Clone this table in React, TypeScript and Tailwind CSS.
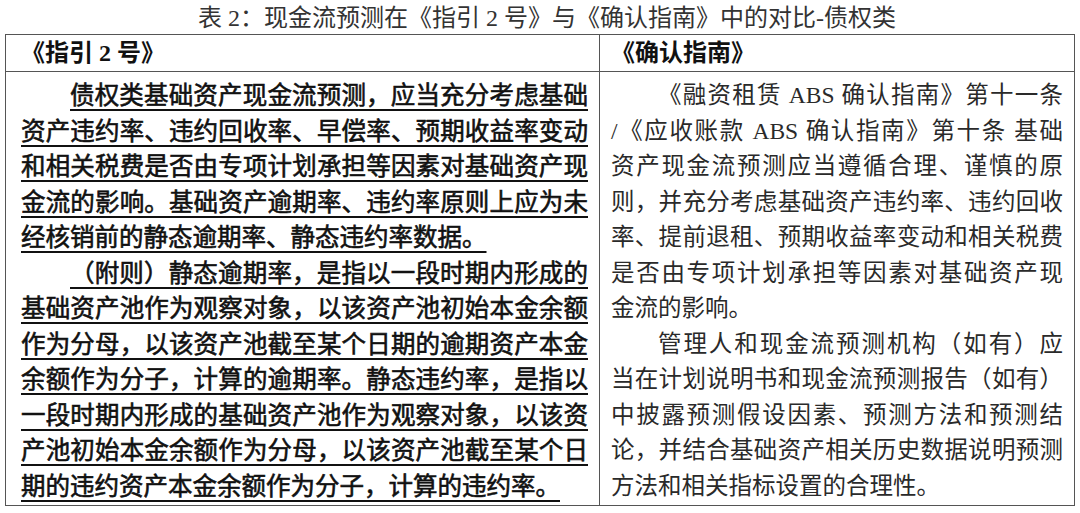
import clsx from "clsx";

const fontStack = "font-['Liberation_Serif','Noto_Sans_CJK_SC',serif]";

interface Line {
  text: string;
  indent?: boolean;
  last?: boolean;
}

const leftLines: Line[] = [
  { text: "债权类基础资产现金流预测，应当充分考虑基础", indent: true },
  { text: "资产违约率、违约回收率、早偿率、预期收益率变动" },
  { text: "和相关税费是否由专项计划承担等因素对基础资产现" },
  { text: "金流的影响。基础资产逾期率、违约率原则上应为未" },
  { text: "经核销前的静态逾期率、静态违约率数据。", last: true },
  { text: "（附则）静态逾期率，是指以一段时期内形成的", indent: true },
  { text: "基础资产池作为观察对象，以该资产池初始本金余额" },
  { text: "作为分母，以该资产池截至某个日期的逾期资产本金" },
  { text: "余额作为分子，计算的逾期率。静态违约率，是指以" },
  { text: "一段时期内形成的基础资产池作为观察对象，以该资" },
  { text: "产池初始本金余额作为分母，以该资产池截至某个日" },
  { text: "期的违约资产本金余额作为分子，计算的违约率。", last: true },
];

const rightLines: Line[] = [
  { text: "《融资租赁 ABS 确认指南》第十一条", indent: true },
  { text: "/《应收账款 ABS 确认指南》第十条 基础" },
  { text: "资产现金流预测应当遵循合理、谨慎的原" },
  { text: "则，并充分考虑基础资产违约率、违约回收" },
  { text: "率、提前退租、预期收益率变动和相关税费" },
  { text: "是否由专项计划承担等因素对基础资产现" },
  { text: "金流的影响。", last: true },
  { text: "管理人和现金流预测机构（如有）应", indent: true },
  { text: "当在计划说明书和现金流预测报告（如有）" },
  { text: "中披露预测假设因素、预测方法和预测结" },
  { text: "论，并结合基础资产相关历史数据说明预测" },
  { text: "方法和相关指标设置的合理性。", last: true },
];

function TextLine({ line, underline }: { line: Line; underline?: boolean }) {
  return (
    <div
      className={clsx(
        line.indent && "pl-[2em]",
        line.last ? "text-left" : "text-justify [text-align-last:justify]"
      )}
    >
      <span className={clsx(underline && "underline decoration-[1.5px] underline-offset-[5px]")}>
        {line.text}
      </span>
    </div>
  );
}

export default function App() {
  return (
    <div lang="zh-CN" className={clsx("w-[1080px] h-[513px] overflow-hidden bg-white", fontStack)}>
      <div className="h-[34px] flex items-center justify-center pl-[14px] pt-[2px] text-[24px] text-[#333]">
        表 2：现金流预测在《指引 2 号》与《确认指南》中的对比-债权类
      </div>

      <div className="ml-[5px] w-[1070px] border border-[#555]">
        <div className="grid grid-cols-[594px_1fr] border-b border-[#555] h-[37px] text-[24px] font-bold text-[#111]">
          <div className="border-r border-[#555] pl-[15px] flex items-center">《指引 2 号》</div>
          <div className="pl-[11px] flex items-center">《确认指南》</div>
        </div>

        <div className="grid grid-cols-[594px_1fr] h-[433px]">
          <div className="border-r border-[#555] pl-[15px] pr-[11px] pt-[6px] text-[24.5px] leading-[35.5px] text-[#111] [-webkit-text-stroke:0.6px_#111]">
            {leftLines.map((line, i) => (
              <TextLine key={i} line={line} underline />
            ))}
          </div>
          <div className="pl-[11px] pr-[11px] pt-[6px] text-[23.5px] leading-[35.5px] text-[#2a2a2a]">
            {rightLines.map((line, i) => (
              <TextLine key={i} line={line} />
            ))}
          </div>
        </div>
      </div>
    </div>
  );
}
